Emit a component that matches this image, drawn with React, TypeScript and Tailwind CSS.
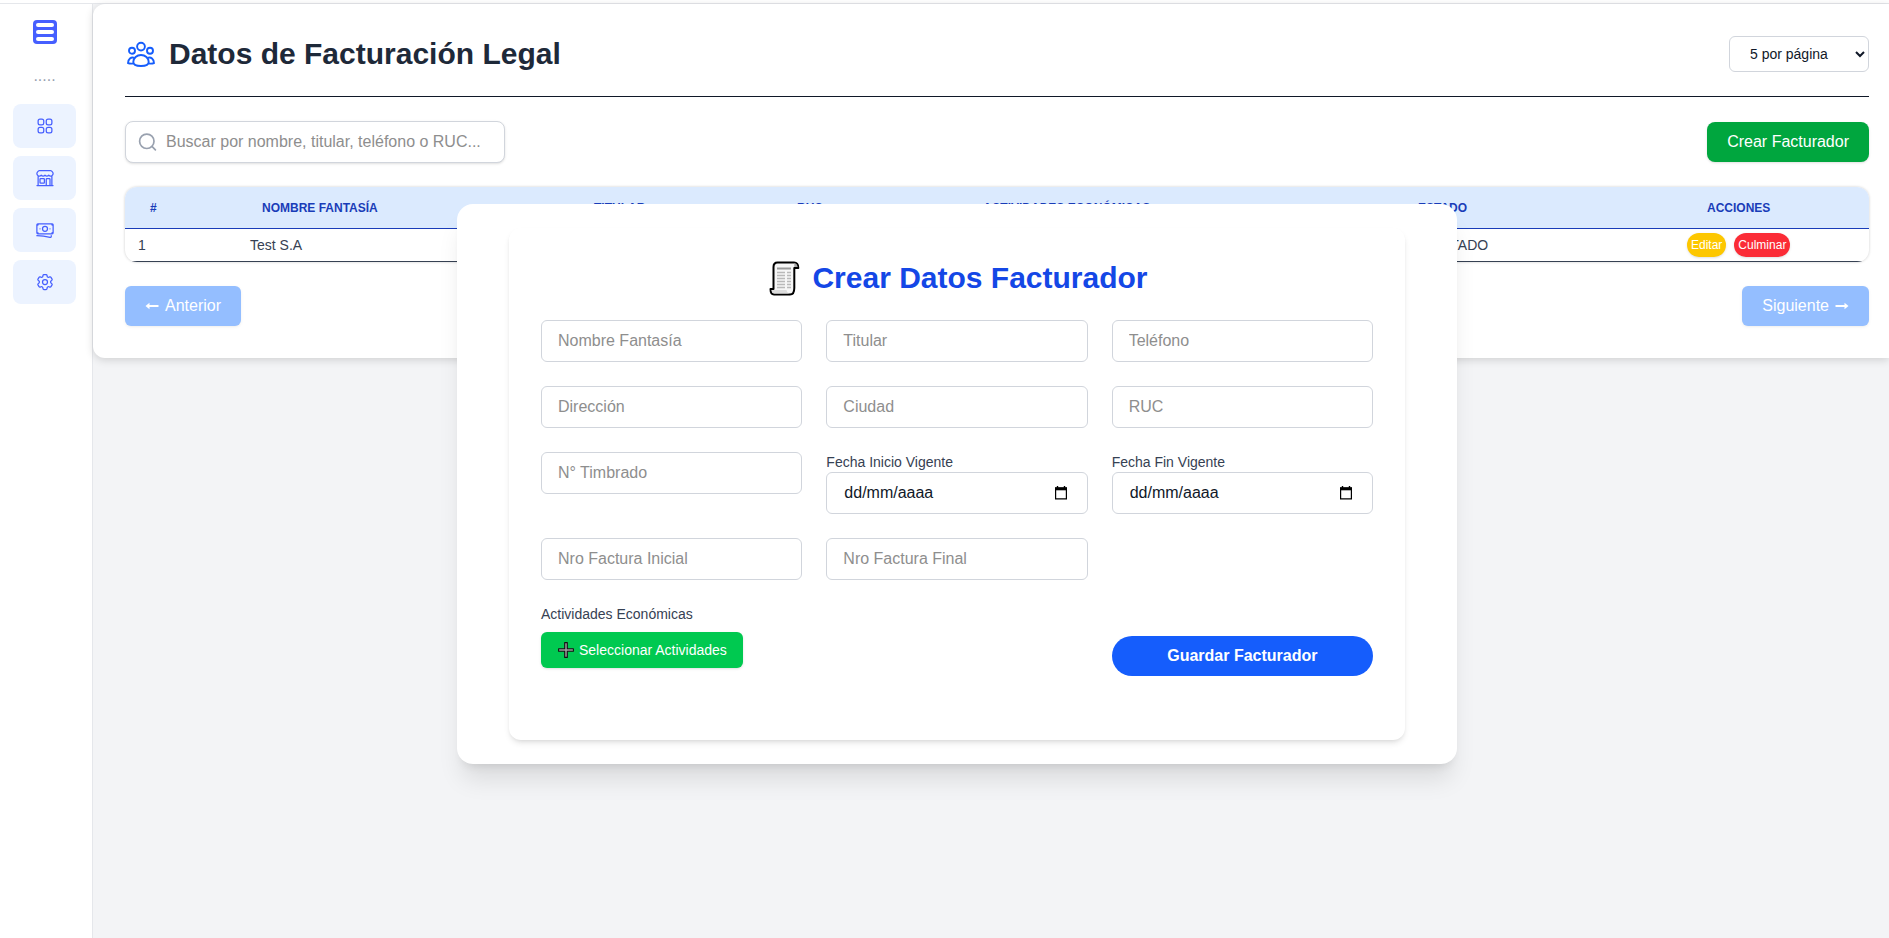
import type { ReactNode } from "react";
import {
  HiOutlineBanknotes,
  HiOutlineBuildingStorefront,
  HiOutlineCog6Tooth,
  HiOutlineSquares2X2,
} from "react-icons/hi2";

const fieldClass =
  "w-full rounded-md border border-gray-300 bg-white px-4 py-2 text-base text-gray-900 placeholder:text-[#8e8e8e] outline-none focus:border-blue-500";

function LogoIcon() {
  return (
    <svg width="24" height="24" viewBox="0 0 24 24" aria-hidden="true">
      <rect width="24" height="24" rx="4" fill="#465fff" />
      <rect x="3" y="3" width="18" height="4" rx="2" fill="#fff" />
      <rect x="3" y="10" width="18" height="4" rx="2" fill="#fff" />
      <rect x="3" y="17" width="18" height="4" rx="2" fill="#fff" />
    </svg>
  );
}

function GroupIcon() {
  return (
    <svg width="32" height="32" viewBox="0 0 32 32" fill="none" stroke="#155dfc" strokeWidth="1.9" strokeLinejoin="round" aria-hidden="true">
      <circle cx="16" cy="8.6" r="3.9" />
      <circle cx="7" cy="12.7" r="3" />
      <circle cx="25" cy="12.7" r="3" />
      <path d="M8.300 24C8.300 20 11.800 17 16 17S23.700 20 23.700 24C23.700 26.500 20.300 28 16 28S8.300 26.500 8.300 24Z" />
      <path d="M9.400 19.800C6 18.600 3 21 3 25.200Q5.400 26 8.600 25.400" />
      <path d="M22.600 19.800C26 18.600 29 21 29 25.200Q26.600 26 23.400 25.400" />
    </svg>
  );
}

function SearchIcon() {
  return (
    <svg className="shrink-0" width="20" height="20" viewBox="0 0 20 20" fill="none" stroke="#99a1af" strokeWidth="1.7" strokeLinecap="round" aria-hidden="true">
      <circle cx="8.8" cy="9.3" r="7.2" />
      <path d="m14.200 14.700 3.200 3.200" />
    </svg>
  );
}

function CalendarIcon() {
  return (
    <svg width="14" height="16" viewBox="0 0 14 16" aria-hidden="true">
      <path d="M3.500 1v2M10.500 1v2" stroke="#000" strokeWidth="1.4" />
      <path d="M1.600 3h10.800v10.800h-10.800z" fill="none" stroke="#000" strokeWidth="1.2" />
      <path d="M1 2.300h12v3H1z" fill="#000" />
    </svg>
  );
}

function ScrollIcon() {
  return (
    <svg width="34" height="35" viewBox="-3 0 34 35" strokeLinejoin="round" aria-hidden="true">
      <path
        d="M8.500 1.500H25Q29.300 1.500 29.300 7H25.300V27Q25.300 33.500 21 33.500H5Q1.500 33.500 1.500 28H4.500V6Q4.500 1.500 8.500 1.500Z"
        fill="#f6f6f6"
        stroke="#000"
        strokeWidth="2"
      />
      <path d="M25 2.300Q28.300 2.600 28.600 6H25.300V3Z" fill="#a8a8a8" />
      <path d="M2.600 29H17.500Q17.600 31.600 20 32.400H5.500Q2.900 32.200 2.600 29Z" fill="#dcdcdc" />
      <path d="M8 7.500h14" stroke="#9a9a9a" strokeWidth="2" />
      <path
        d="M8 11.500h8M18 11.500h4M8 14.500h8M18 14.500h4M8 17.500h8M18 17.500h4M8 20.500h8M18 20.500h4M8 23.500h8M18 23.500h4M8 26.500h8M18 26.500h4"
        stroke="#b9b9b9"
        strokeWidth="1.300"
      />
    </svg>
  );
}

function PlusIcon() {
  return (
    <svg width="18" height="16" viewBox="-1 0 18 16" aria-hidden="true">
      <path d="M6.700 0.600h2.600v6.100h6.100v2.600H9.300v6.100H6.700V9.300H0.600V6.700h6.100z" fill="#9b9b9b" stroke="#111" strokeWidth="1.100" strokeLinejoin="round" />
    </svg>
  );
}

function Arrow({ back = false }: { back?: boolean }) {
  return (
    <svg width="14" height="8" viewBox="0 0 14 8" fill="#fff" aria-hidden="true">
      {back ? (
        <path d="M0.500 4 4.500 0.700V2.900H13.500V5.100H4.500V7.300z" />
      ) : (
        <path d="M13.500 4 9.500 0.700V2.900H0.500V5.100H9.500V7.300z" />
      )}
    </svg>
  );
}

function NavItem({ label, children }: { label: string; children: ReactNode }) {
  return (
    <a href="#" aria-label={label} className="flex h-11 items-center justify-center rounded-lg bg-[#ecf3ff] text-xl text-[#465fff]">
      {children}
    </a>
  );
}

function Sidebar() {
  return (
    <aside className="flex w-[93px] shrink-0 flex-col border-r border-gray-200 bg-white pl-[13px] pr-4">
      <a href="#" aria-label="Inicio" className="flex justify-center pt-4">
        <LogoIcon />
      </a>
      <p className="mt-[22px] text-center text-base leading-5 text-gray-400">.....</p>
      <nav className="mt-[18px] flex flex-col gap-2">
        <NavItem label="Panel"><HiOutlineSquares2X2 /></NavItem>
        <NavItem label="Locales"><HiOutlineBuildingStorefront /></NavItem>
        <NavItem label="Pagos"><HiOutlineBanknotes /></NavItem>
        <NavItem label="Ajustes"><HiOutlineCog6Tooth /></NavItem>
      </nav>
    </aside>
  );
}

const columns = [
  { title: "#", width: "w-[112px]" },
  { title: "Nombre Fantasía", width: "w-[332px]" },
  { title: "Titular", width: "w-[203px]" },
  { title: "RUC", width: "w-[186px]" },
  { title: "Actividades Económicas", width: "w-[435px]" },
  { title: "Estado", width: "w-[289px]" },
  { title: "Acciones", width: "w-[187px]" },
];

const cellClass = "h-[33px] border-b border-gray-700 px-[13px]";

function BillersTable() {
  return (
    <div className="mt-6 overflow-hidden rounded-xl shadow-[0_0_3px_rgba(0,0,0,0.2)]">
      <table className="w-full table-fixed border-separate border-spacing-0 text-left text-sm text-gray-700">
        <thead className="bg-blue-100 text-xs uppercase text-blue-800">
          <tr>
            {columns.map((c) => (
              <th key={c.title} className={`${c.width} h-[42px] border-b border-blue-800 px-[25px] font-bold`}>{c.title}</th>
            ))}
          </tr>
        </thead>
        <tbody>
          <tr>
            <td className={cellClass}>1</td>
            <td className={cellClass}>Test S.A</td>
            <td className={cellClass} />
            <td className={cellClass} />
            <td className={cellClass} />
            <td className={cellClass}>HABILITADO</td>
            <td className="h-[33px] border-b border-gray-700 px-[5px]">
              <div className="flex gap-2 text-xs text-white">
                <button className="h-6 rounded-full bg-[#fdc700] px-1 shadow-sm">Editar</button>
                <button className="h-6 rounded-full bg-[#fb2c36] px-1 shadow-sm">Culminar</button>
              </div>
            </td>
          </tr>
        </tbody>
      </table>
    </div>
  );
}

function TextField({ name }: { name: string }) {
  return (
    <div>
      <input type="text" aria-label={name} placeholder={name} className={fieldClass} />
    </div>
  );
}

function DateField({ id, label }: { id: string; label: string }) {
  return (
    <div>
      <label htmlFor={id} className="block text-sm leading-5 text-gray-700">{label}</label>
      <div className="flex items-center rounded-md border border-gray-300 bg-white px-4">
        <input id={id} type="text" placeholder="dd/mm/aaaa" className="min-w-0 flex-1 py-2 pl-px text-base outline-none placeholder:text-gray-900" />
        <button type="button" aria-label={`Abrir calendario: ${label}`} className="mr-[3px]"><CalendarIcon /></button>
      </div>
    </div>
  );
}

function CreateDialog() {
  return (
    <div className="absolute inset-0 flex items-start justify-center pl-[25px] pt-[204px]">
      <div role="dialog" aria-labelledby="dialog-title" className="w-full max-w-[1000px] rounded-2xl bg-white py-6 shadow-xl">
        <form className="mx-auto max-w-4xl rounded-xl bg-white p-8 shadow-md">
          <h2 id="dialog-title" className="mb-6 flex items-center justify-center gap-3 text-3xl leading-9 font-bold text-blue-700">
            <ScrollIcon />
            Crear Datos Facturador
          </h2>
          <div className="grid grid-cols-3 gap-6">
            <TextField name="Nombre Fantasía" />
            <TextField name="Titular" />
            <TextField name="Teléfono" />
            <TextField name="Dirección" />
            <TextField name="Ciudad" />
            <TextField name="RUC" />
            <TextField name="N° Timbrado" />
            <DateField id="start" label="Fecha Inicio Vigente" />
            <DateField id="end" label="Fecha Fin Vigente" />
            <TextField name="Nro Factura Inicial" />
            <TextField name="Nro Factura Final" />
            <div className="col-span-2 col-start-1 pb-10">
              <p className="mb-2 text-sm leading-5 text-gray-700">Actividades Económicas</p>
              <button type="button" className="flex h-9 items-center gap-1 rounded-md bg-[#00c950] px-4 text-sm text-white shadow-sm">
                <PlusIcon />
                Seleccionar Actividades
              </button>
            </div>
            <button type="submit" className="h-10 self-center rounded-full bg-[#155dfc] text-base font-bold text-white">
              Guardar Facturador
            </button>
          </div>
        </form>
      </div>
    </div>
  );
}

export default function App() {
  return (
    <div className="relative flex min-h-screen flex-col overflow-hidden bg-gray-100 font-['Liberation_Sans',Arial,sans-serif]">
      <header className="h-1 border-b border-gray-200 bg-white" />
      <div className="flex flex-1">
        <Sidebar />
        <main className="min-w-0 flex-1">
          <section className="rounded-l-xl bg-white py-8 pl-8 pr-5 shadow-[0_2px_8px_rgba(0,0,0,0.15)]">
            <div className="flex items-center justify-between border-b border-gray-900 pb-6">
              <h1 className="flex items-center gap-3 text-3xl leading-9 font-bold text-gray-800">
                <GroupIcon />
                Datos de Facturación Legal
              </h1>
              <select aria-label="Registros por página" className="h-9 w-[140px] rounded-md border border-gray-300 bg-white pl-4 text-sm text-gray-900">
                <option>5 por página</option>
                <option>10 por página</option>
                <option>20 por página</option>
              </select>
            </div>
            <div className="mt-6 flex items-center justify-between">
              <div className="flex w-[380px] items-center gap-2 rounded-lg border border-gray-300 bg-white pl-3 pr-4 shadow-sm">
                <SearchIcon />
                <input
                  type="text"
                  aria-label="Buscar facturador"
                  placeholder="Buscar por nombre, titular, teléfono o RUC..."
                  className="min-w-0 flex-1 py-2 text-base outline-none placeholder:text-[#8e8e8e]"
                />
              </div>
              <button className="h-10 rounded-lg bg-[#00a63e] px-5 text-base text-white shadow-sm">Crear Facturador</button>
            </div>
            <BillersTable />
            <div className="mt-6 flex justify-between">
              <button disabled className="flex h-10 items-center gap-1.5 rounded-md bg-[#2b7fff] px-5 text-base text-white opacity-50 shadow-sm">
                <Arrow back />
                Anterior
              </button>
              <button disabled className="flex h-10 items-center gap-1.5 rounded-md bg-[#2b7fff] px-5 text-base text-white opacity-50 shadow-sm">
                Siguiente
                <Arrow />
              </button>
            </div>
          </section>
        </main>
      </div>
      <CreateDialog />
    </div>
  );
}
